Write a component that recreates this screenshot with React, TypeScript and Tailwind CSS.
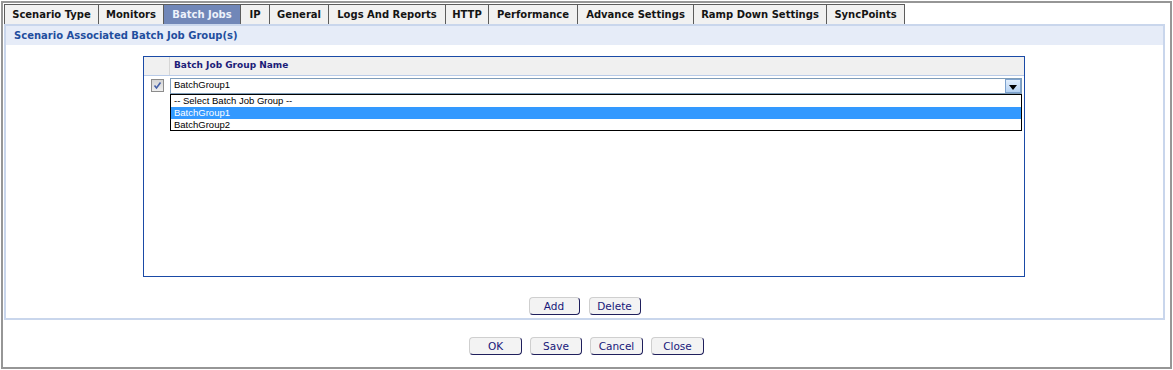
import React from "react";

const tabs: { label: string; w: string; active?: boolean }[] = [
  { label: "Scenario Type", w: "w-[94px]" },
  { label: "Monitors", w: "w-[65px]" },
  { label: "Batch Jobs", w: "w-[77px]", active: true },
  { label: "IP", w: "w-[29px]" },
  { label: "General", w: "w-[59px]" },
  { label: "Logs And Reports", w: "w-[117px]" },
  { label: "HTTP", w: "w-[43px]" },
  { label: "Performance", w: "w-[89px]" },
  { label: "Advance Settings", w: "w-[116px]" },
  { label: "Ramp Down Settings", w: "w-[133px]" },
  { label: "SyncPoints", w: "w-[79px]" },
];

function Btn({ label, w }: { label: string; w: string }) {
  return (
    <button
      className={`${w} h-[18px] bg-[#f3f3f3] border border-[#cfcfcf] border-r-[#1f1f5c] border-b-[#1f1f5c] rounded-[4px] text-[10.5px] leading-none text-[#17177a] flex items-center justify-center`}
      style={{ fontFamily: '"DejaVu Sans", Verdana, sans-serif' }}
    >
      {label}
    </button>
  );
}

export default function App() {
  return (
    <div
      className="w-[1173px] h-[370px] bg-white overflow-hidden"
      style={{ fontFamily: '"DejaVu Sans", Verdana, sans-serif' }}
    >
      <div className="ml-px mt-px w-[1171px] h-[368px] border-2 border-[#969696] flex flex-col">
        <div className="ml-px mt-px w-[1161px] flex flex-col">
          {/* tabs */}
          <div className="flex h-[20px]">
            {tabs.map((t, i) => (
              <div
                key={t.label}
                className={`${t.w} h-[20px] flex items-center justify-center border-t border-l border-[#5c5c5c] text-[10px] font-bold ${
                  i === tabs.length - 1 ? "border-r" : ""
                } ${t.active ? "bg-[#7187b8] text-[#eef2fb]" : "bg-[#f1f1f1] text-[#141414]"}`}
              >
                {t.label}
              </div>
            ))}
          </div>
          {/* panel */}
          <div className="h-[296px] border-2 border-[#c9d6ec] flex flex-col">
            <div className="h-[19px] bg-[#e6ecf8] flex items-center pl-[8px] text-[10px] font-bold text-[#1f4e9e]">
              Scenario Associated Batch Job Group(s)
            </div>
            <div className="mt-[11px] ml-[137px] w-[882px] h-[221px] border border-[#1a4aa6] relative">
              <div className="h-[19px] bg-[#f0f0f0] border-b border-[#b9cbe8] flex">
                <div className="w-[26px] border-r border-[#d6d6d6]" />
                <div className="pl-[4px] flex items-center text-[9px] font-bold text-[#1c1c78]">
                  Batch Job Group Name
                </div>
              </div>
              <div className="h-[19px] flex items-center">
                <div className="w-[26px] flex items-center justify-center">
                  <div className="w-[13px] h-[13px] border border-[#8c8c8c] bg-gradient-to-b from-[#d4d4d4] to-[#efefef] flex items-center justify-center">
                    <svg width="9" height="9" viewBox="0 0 9 9">
                      <path d="M1.5 4.5 L3.5 7 L7.5 1.5" stroke="#4560a8" strokeWidth="1.6" fill="none" />
                    </svg>
                  </div>
                </div>
                <div className="w-[852px] h-[16px] border border-[#7f9db9] flex items-center bg-white">
                  <div
                    className="flex-1 pl-[3px] text-[9.5px] text-black"
                    style={{ fontFamily: '"Liberation Sans", Arial, sans-serif' }}
                  >
                    BatchGroup1
                  </div>
                  <div className="w-[16px] h-[14px] border border-[#7da2ce] bg-gradient-to-b from-[#e2eefc] to-[#b5d2f3] flex items-end justify-center pb-[2px]">
                    <svg width="8" height="5" viewBox="0 0 8 5">
                      <polygon points="0,0 8,0 4,5" fill="#000" />
                    </svg>
                  </div>
                </div>
              </div>
              {/* open dropdown list */}
              <div
                className="absolute left-[26px] top-[37px] w-[852px] h-[37px] border border-black bg-white flex flex-col text-[9.5px] leading-[12px] text-black"
                style={{ fontFamily: '"Liberation Sans", Arial, sans-serif' }}
              >
                <div className="h-[12px] pl-[3px]">-- Select Batch Job Group --</div>
                <div className="h-[12px] pl-[3px] bg-[#3399ff] text-white">BatchGroup1</div>
                <div className="h-[12px] pl-[3px]">BatchGroup2</div>
              </div>
            </div>
            <div className="mt-[20px] flex justify-center gap-[9px]">
              <Btn label="Add" w="w-[51px]" />
              <Btn label="Delete" w="w-[52px]" />
            </div>
          </div>
          <div className="mt-[17px] flex justify-center gap-[8px] pl-[4px]">
            <Btn label="OK" w="w-[53px]" />
            <Btn label="Save" w="w-[52px]" />
            <Btn label="Cancel" w="w-[53px]" />
            <Btn label="Close" w="w-[53px]" />
          </div>
        </div>
      </div>
    </div>
  );
}
